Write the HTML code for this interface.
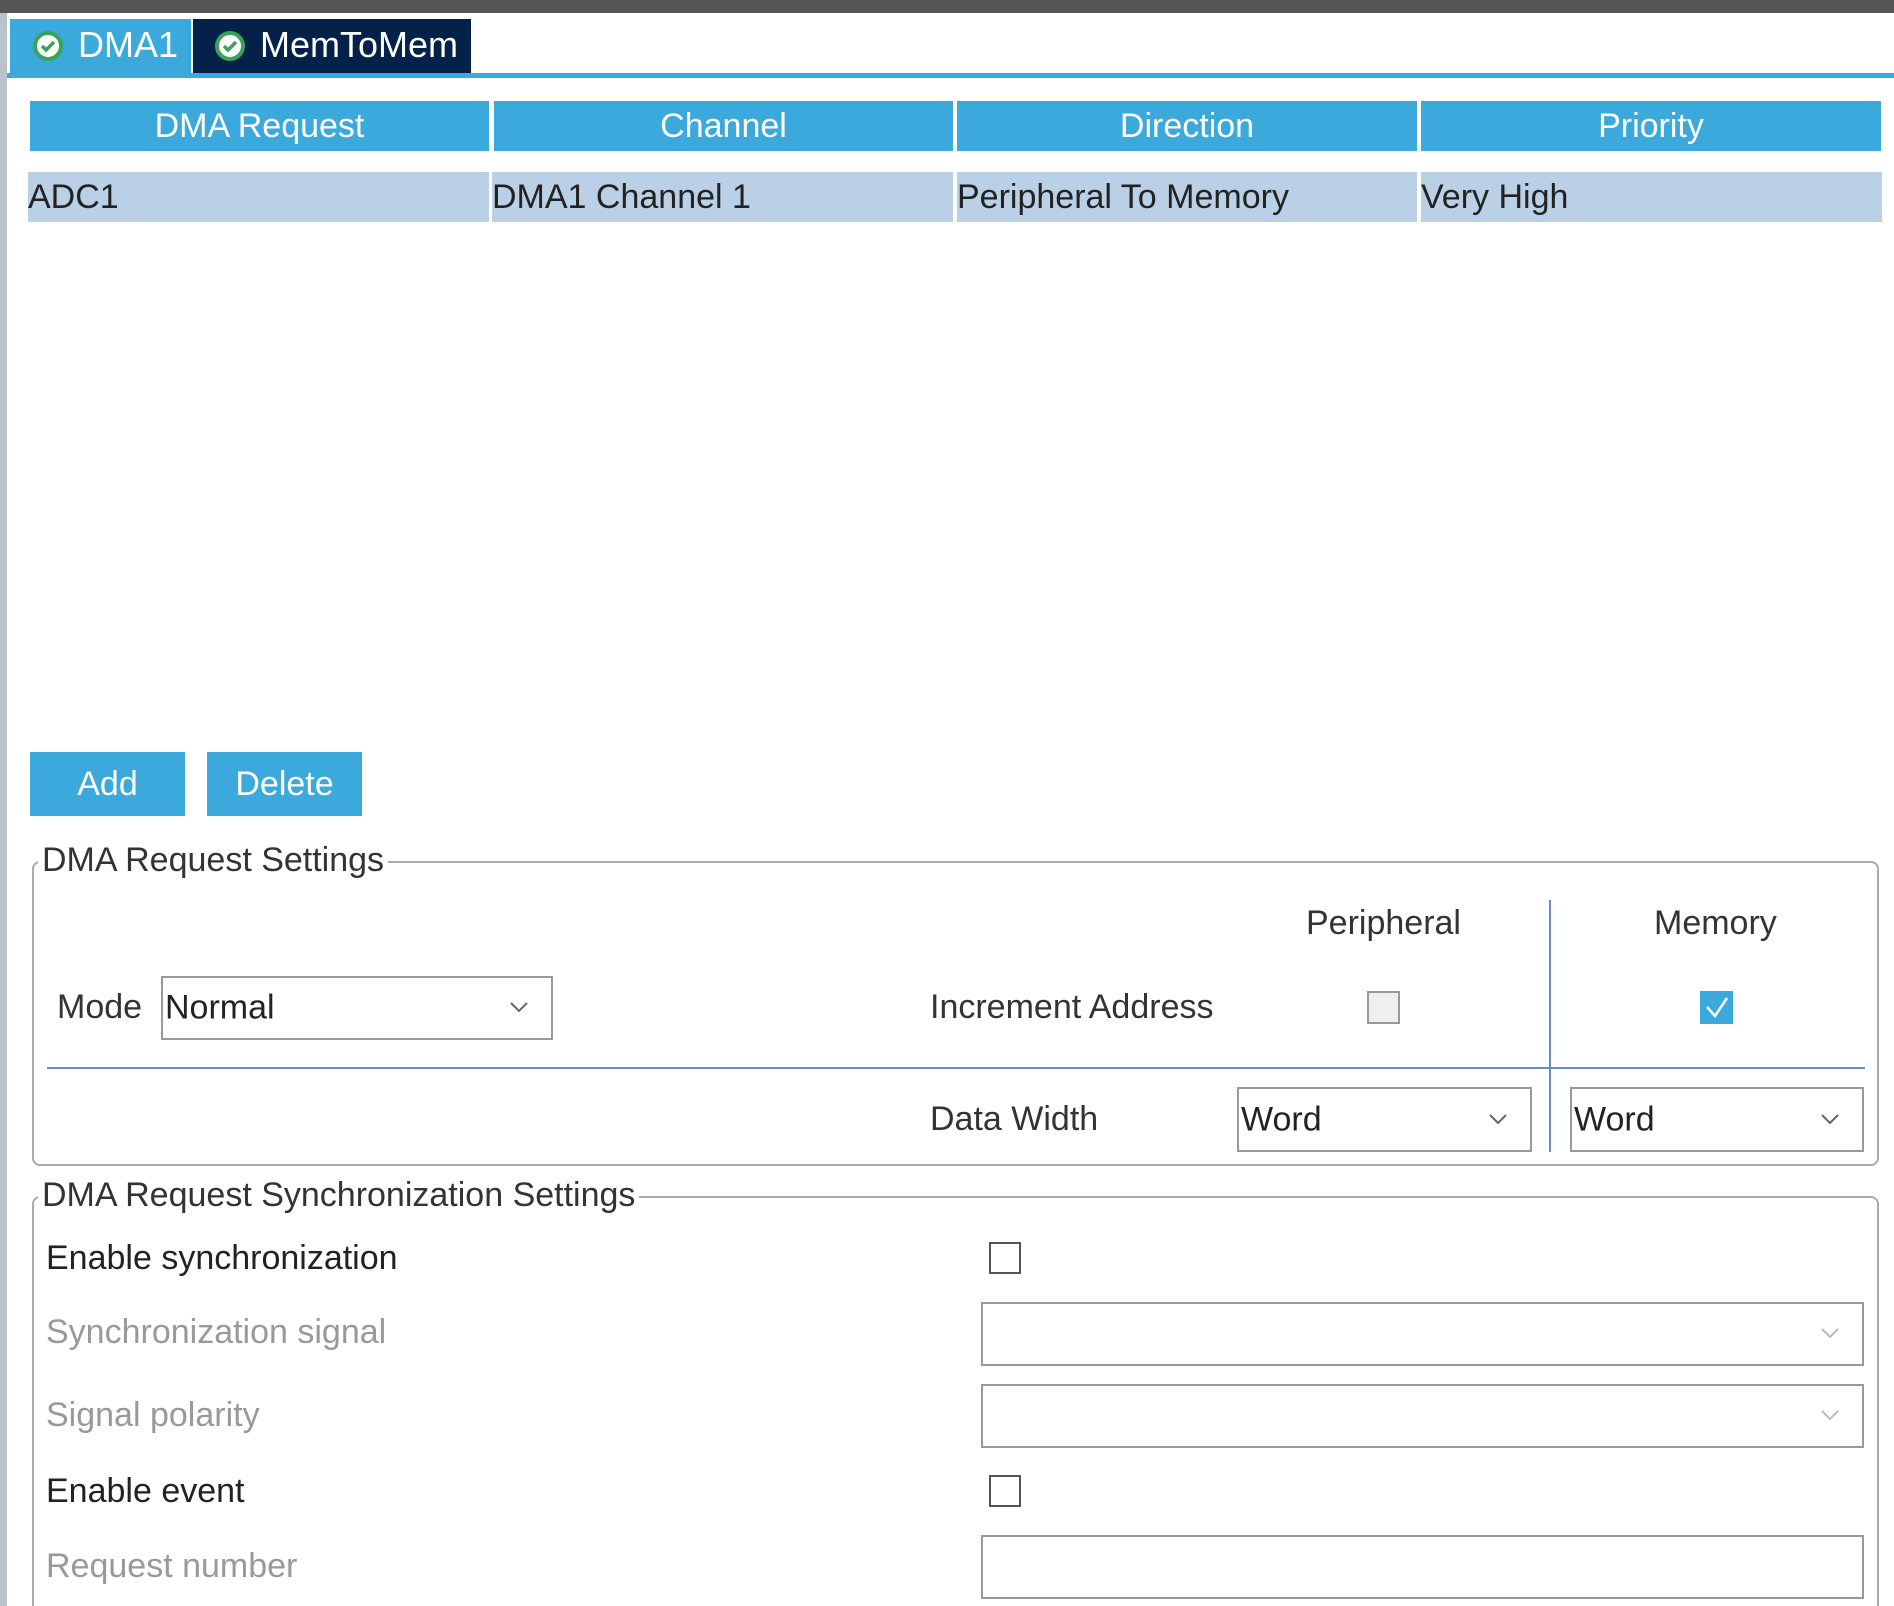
<!DOCTYPE html>
<html><head><meta charset="utf-8"><style>
html,body{margin:0;padding:0;width:1894px;height:1606px;overflow:hidden;}
#w{position:relative;width:1894px;height:1606px;overflow:hidden;background:#fff;font-family:"Liberation Sans",Arial,sans-serif;color:#333;}
.a{position:absolute;}
.t{position:absolute;font-size:34px;line-height:1;white-space:nowrap;}
.hd{position:absolute;top:101px;height:50px;background:#3ba9db;color:#fff;font-size:34px;line-height:50px;text-align:center;}
.rw{position:absolute;top:172px;height:50px;background:#b9d0e6;color:#222;font-size:34px;line-height:50px;box-sizing:border-box;}
.btn{position:absolute;top:752px;height:64px;background:#3ba9db;color:#fff;font-size:34px;line-height:64px;text-align:center;}
.sel{position:absolute;border:2px solid #999;box-sizing:border-box;background:#fff;}
.sel span{position:absolute;left:2px;top:50%;transform:translateY(-50%);font-size:34px;color:#222;}
.chev{position:absolute;right:22px;top:50%;margin-top:-8px;}
.cb{position:absolute;width:32px;height:32px;border:2px solid #555;box-sizing:border-box;background:#fff;}
.grey{color:#999;}
</style></head><body><div id="w">
<div class="a" style="left:0;top:0;width:1894px;height:13px;background:#545554"></div>
<div class="a" style="left:0;top:13px;width:7px;height:1593px;background:#b8c3cb"></div>
<div class="a" style="left:10px;top:19px;width:181px;height:55px;background:#3ba9db"></div>
<div class="a" style="left:193px;top:19px;width:278px;height:55px;background:#032149"></div>
<div class="a" style="left:7px;top:73px;width:1887px;height:5px;background:#3ba9db"></div>
<svg class="a" style="left:33px;top:31px" width="30" height="30" viewBox="0 0 30 30"><circle cx="15" cy="15" r="13" fill="#fff" stroke="#3aa35a" stroke-width="4"/><path d="M9 15l4 4 8-8" fill="none" stroke="#3aa35a" stroke-width="3.5"/></svg>
<div class="t" style="left:78px;top:27px;color:#fff;font-size:36px">DMA1</div>
<svg class="a" style="left:215px;top:31px" width="30" height="30" viewBox="0 0 30 30"><circle cx="15" cy="15" r="13" fill="#fff" stroke="#3aa35a" stroke-width="4"/><path d="M9 15l4 4 8-8" fill="none" stroke="#3aa35a" stroke-width="3.5"/></svg>
<div class="t" style="left:260px;top:27px;color:#fff;font-size:36px">MemToMem</div>
<div class="hd" style="left:30px;width:459px">DMA Request</div>
<div class="hd" style="left:494px;width:459px">Channel</div>
<div class="hd" style="left:957px;width:460px">Direction</div>
<div class="hd" style="left:1421px;width:460px">Priority</div>
<div class="rw" style="left:28px;width:461px">ADC1</div>
<div class="rw" style="left:492px;width:461px">DMA1 Channel 1</div>
<div class="rw" style="left:957px;width:460px">Peripheral To Memory</div>
<div class="rw" style="left:1421px;width:461px">Very High</div>
<div class="btn" style="left:30px;width:155px">Add</div>
<div class="btn" style="left:207px;width:155px">Delete</div>
<div class="a" style="left:32px;top:861px;width:1847px;height:305px;border:2px solid #aaa;border-radius:8px;box-sizing:border-box"></div>
<div class="t" style="left:38px;top:843px;background:#fff;padding:0 4px;">DMA Request Settings</div>
<div class="t" style="left:1306px;top:906px">Peripheral</div>
<div class="t" style="left:1654px;top:906px">Memory</div>
<div class="a" style="left:1549px;top:900px;width:2px;height:252px;background:#6b8acb"></div>
<div class="a" style="left:47px;top:1067px;width:1818px;height:2px;background:#6b8acb"></div>
<div class="t" style="left:57px;top:990px">Mode</div>
<div class="sel" style="left:161px;top:976px;width:392px;height:64px"><span>Normal</span><svg class="chev" width="20" height="14" viewBox="0 0 20 14"><path d="M2 3l8 8 8-8" fill="none" stroke="#666" stroke-width="2"/></svg></div>
<div class="t" style="left:930px;top:990px">Increment Address</div>
<div class="a" style="left:1367px;top:991px;width:33px;height:33px;border:2px solid #999;box-sizing:border-box;background:#eeeff1"></div>
<svg class="a" style="left:1700px;top:991px" width="33" height="33" viewBox="0 0 33 33"><rect width="33" height="33" fill="#3ba9db"/><path d="M7 16l8 9 12-18" fill="none" stroke="#fff" stroke-width="2.5"/></svg>
<div class="t" style="left:930px;top:1102px">Data Width</div>
<div class="sel" style="left:1237px;top:1087px;width:295px;height:65px"><span>Word</span><svg class="chev" width="20" height="14" viewBox="0 0 20 14"><path d="M2 3l8 8 8-8" fill="none" stroke="#666" stroke-width="2"/></svg></div>
<div class="sel" style="left:1570px;top:1087px;width:294px;height:65px"><span>Word</span><svg class="chev" width="20" height="14" viewBox="0 0 20 14"><path d="M2 3l8 8 8-8" fill="none" stroke="#666" stroke-width="2"/></svg></div>
<div class="a" style="left:32px;top:1196px;width:1847px;height:440px;border:2px solid #aaa;border-radius:8px;box-sizing:border-box"></div>
<div class="t" style="left:38px;top:1178px;background:#fff;padding:0 4px;">DMA Request Synchronization Settings</div>
<div class="t" style="left:46px;top:1241px;color:#222">Enable synchronization</div>
<div class="cb" style="left:989px;top:1242px"></div>
<div class="t grey" style="left:46px;top:1315px">Synchronization signal</div>
<div class="sel" style="left:981px;top:1302px;width:883px;height:64px"><svg class="chev" width="20" height="14" viewBox="0 0 20 14"><path d="M2 3l8 8 8-8" fill="none" stroke="#bbb" stroke-width="2"/></svg></div>
<div class="t grey" style="left:46px;top:1398px">Signal polarity</div>
<div class="sel" style="left:981px;top:1384px;width:883px;height:64px"><svg class="chev" width="20" height="14" viewBox="0 0 20 14"><path d="M2 3l8 8 8-8" fill="none" stroke="#bbb" stroke-width="2"/></svg></div>
<div class="t" style="left:46px;top:1474px;color:#222">Enable event</div>
<div class="cb" style="left:989px;top:1475px"></div>
<div class="t grey" style="left:46px;top:1549px">Request number</div>
<div class="sel" style="left:981px;top:1535px;width:883px;height:64px"></div>
</div></body></html>
